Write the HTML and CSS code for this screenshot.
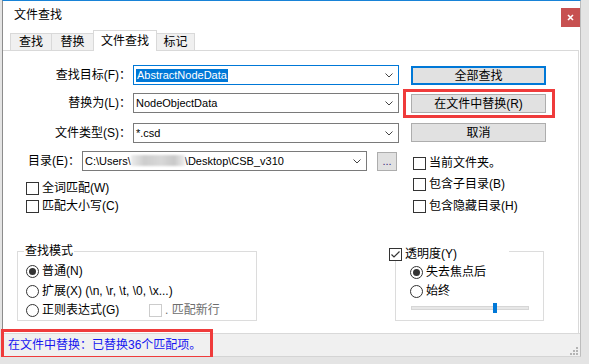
FILE: index.html
```html
<!DOCTYPE html>
<html lang="zh">
<head>
<meta charset="utf-8">
<title>文件查找</title>
<link rel="stylesheet" href="styles.css">
</head>
<body>
<div class="win">
  <div class="titlebar">
    <span class="title">文件查找</span>
    <div class="close"><svg width="7" height="7" viewBox="0 0 7 7"><path d="M1 1 L6 6 M6 1 L1 6" stroke="#fff" stroke-width="1.6"/></svg></div>
  </div>
  <div class="tabs">
    <div class="tab t1">查找</div>
    <div class="tab t2">替换</div>
    <div class="tab active">文件查找</div>
    <div class="tab t4">标记</div>
  </div>
  <div class="panel">
    <div class="top">
      <div class="leftcol">
        <div class="row r1">
          <label class="lbl w1">查找目标(F)：</label>
          <div class="combo focus"><span class="val sel">AbstractNodeData</span><svg class="chev" width="8" height="5" viewBox="0 0 8 5"><polyline points="0.5,0.5 4,4 7.5,0.5" fill="none" stroke="#444" stroke-width="1"/></svg></div>
        </div>
        <div class="row r2">
          <label class="lbl w1">替换为(L)：</label>
          <div class="combo"><span class="val">NodeObjectData</span><svg class="chev" width="8" height="5" viewBox="0 0 8 5"><polyline points="0.5,0.5 4,4 7.5,0.5" fill="none" stroke="#444" stroke-width="1"/></svg></div>
        </div>
        <div class="row r3">
          <label class="lbl w1">文件类型(S)：</label>
          <div class="combo"><span class="val">*.csd</span><svg class="chev" width="8" height="5" viewBox="0 0 8 5"><polyline points="0.5,0.5 4,4 7.5,0.5" fill="none" stroke="#444" stroke-width="1"/></svg></div>
        </div>
        <div class="row r4">
          <label class="lbl w2">目录(E)：</label>
          <div class="combo dir"><span class="val">C:\Users\<span class="blur"></span>\Desktop\CSB_v310</span><svg class="chev" width="8" height="5" viewBox="0 0 8 5"><polyline points="0.5,0.5 4,4 7.5,0.5" fill="none" stroke="#444" stroke-width="1"/></svg></div>
          <div class="btn dots">...</div>
        </div>
        <div class="chk c1"><span class="box"></span><span>全词匹配(W)</span></div>
        <div class="chk c2"><span class="box"></span><span>匹配大小写(C)</span></div>
      </div>
      <div class="rightcol">
        <div class="btn b1">全部查找</div>
        <div class="btn b2">在文件中替换(R)</div>
        <div class="btn b3">取消</div>
        <div class="chk rc1"><span class="box"></span><span>当前文件夹。</span></div>
        <div class="chk rc2"><span class="box"></span><span>包含子目录(B)</span></div>
        <div class="chk rc3"><span class="box"></span><span>包含隐藏目录(H)</span></div>
      </div>
    </div>
    <div class="groups">
      <div class="group g1">
        <span class="gt1">查找模式</span>
        <div class="radio"><span class="rb on"></span><span>普通(N)</span></div>
        <div class="radio gr2"><span class="rb"></span><span>扩展(X) (\n, \r, \t, \0, \x...)</span></div>
        <div class="radio gr3"><span class="rb"></span><span class="rlab">正则表达式(G)</span>
          <span class="chk dis"><span class="box"></span><span>. 匹配新行</span></span>
        </div>
      </div>
      <div class="group g2">
        <div class="gt2"><span class="box"><svg width="11" height="11" viewBox="0 0 11 11"><polyline points="1.5,5.5 4,8 9.5,2.5" fill="none" stroke="#333" stroke-width="1.2"/></svg></span><span>透明度(Y)</span></div>
        <div class="radio"><span class="rb on"></span><span>失去焦点后</span></div>
        <div class="radio gr2b"><span class="rb"></span><span>始终</span></div>
        <div class="slider"><span class="thumb"></span></div>
      </div>
    </div>
  </div>
  <div class="status">
    <span>在文件中替换：已替换36个匹配项。</span>
    <svg class="grip" width="8" height="8" viewBox="0 0 8 8"><g fill="#b4b4b4"><rect x="6" y="0" width="2" height="2"/><rect x="3" y="3" width="2" height="2"/><rect x="6" y="3" width="2" height="2"/><rect x="0" y="6" width="2" height="2"/><rect x="3" y="6" width="2" height="2"/><rect x="6" y="6" width="2" height="2"/></g></svg>
  </div>
  <div class="mark mark-btn"></div>
  <div class="mark mark-status"></div>
</div>
</body>
</html>
```
FILE: styles.css
```css
body {
  margin: 0;
  background: #e4e4e4;
  font: 12px/14px "Liberation Sans", "Noto Sans CJK SC", sans-serif;
  color: #000;
}
.win {
  margin-left: 2px;
  width: 579px;
  height: 357px;
  box-sizing: border-box;
  border-top: 1px solid #1883d7;
  border-left: 1px solid #8c8c8c;
  border-right: 1px solid #bdbdbd;
  border-bottom: 1px solid #d4d4d4;
  background: #fff;
  position: relative;
  display: flex;
  flex-direction: column;
}
.titlebar {
  height: 29px;
  display: flex;
  justify-content: space-between;
  align-items: flex-start;
}
.title { margin: 7px 0 0 11px; }
.close {
  width: 19px;
  height: 19px;
  margin-top: 7px;
  background: #c75050;
  display: flex;
  align-items: center;
  justify-content: center;
}
.tabs {
  height: 20px;
  display: flex;
  align-items: flex-end;
  padding-left: 7px;
  position: relative;
  z-index: 1;
}
.tab {
  height: 17px;
  box-sizing: border-box;
  border: 1px solid #d9d9d9;
  border-bottom: none;
  background: #f0f0f0;
  margin-right: -1px;
  display: flex;
  align-items: center;
  justify-content: center;
}
.t1 { width: 42px; }
.t2 { width: 43px; }
.t4 { width: 39px; }
.tab.active {
  width: 64px;
  height: 21px;
  margin-bottom: -1px;
  background: #fff;
  position: relative;
  z-index: 2;
}
.panel {
  height: 283px;
  width: 576px;
  box-sizing: border-box;
  border-top: 1px solid #d9d9d9;
  border-right: 1px solid #d9d9d9;
  display: flex;
  flex-direction: column;
}
.top { height: 200px; display: flex; }
.leftcol { width: 396px; }
.row { display: flex; height: 20px; align-items: center; }
.r1 { margin-top: 14px; }
.r2 { margin-top: 8px; }
.r3 { margin-top: 10px; }
.r4 { margin-top: 8px; }
.lbl { text-align: right; white-space: nowrap; }
.w1 { width: 128px; margin-right: 2px; }
.w2 { width: 77px; margin-right: 2px; }
.combo {
  width: 266px;
  height: 20px;
  box-sizing: border-box;
  border: 1px solid #7a7a7a;
  display: flex;
  align-items: center;
  justify-content: space-between;
  padding: 0 5px 0 2px;
  background: #fff;
}
.combo.focus { border-color: #0078d7; }
.combo.dir { width: 285px; }
.val { font-size: 11px; line-height: 13px; white-space: nowrap; }
.sel { background: #0078d7; color: #fff; display: inline-block; padding: 0 1px; }
.blur {
  display: inline-block;
  width: 54px;
  height: 11px;
  vertical-align: -1px;
  background: linear-gradient(90deg, #ececec, #cdcdcd 25%, #d8d8d8 55%, #c9c9c9 80%, #eeeeee);
  filter: blur(1px);
}
.btn {
  width: 135px;
  height: 19px;
  box-sizing: border-box;
  border: 1px solid #adadad;
  background: #e1e1e1;
  display: flex;
  align-items: center;
  justify-content: center;
}
.dots {
  width: 20px;
  margin-left: 10px;
  color: #3a2a7a;
  font-size: 11px;
  line-height: 10px;
}
.chk {
  display: flex;
  align-items: center;
  height: 13px;
  line-height: 13px;
  gap: 3px;
  white-space: nowrap;
}
.box {
  width: 13px;
  height: 13px;
  box-sizing: border-box;
  border: 1px solid #333;
  background: #fff;
  display: flex;
  align-items: center;
  justify-content: center;
  flex: none;
}
.c1 { margin: 11px 0 0 23px; }
.c2 { margin: 5px 0 0 23px; }
.rightcol {
  margin-left: 12px;
  width: 135px;
  display: flex;
  flex-direction: column;
  align-items: flex-start;
}
.b1 { margin-top: 15px; border: 2px solid #0078d7; }
.b2 { margin-top: 9px; }
.b3 { margin-top: 10px; }
.rc1 { margin: 15px 0 0 2px; }
.rc2 { margin: 8px 0 0 2px; }
.rc3 { margin: 9px 0 0 2px; }
.groups { display: flex; height: 70px; }
.group {
  position: relative;
  height: 70px;
  box-sizing: border-box;
  border: 1px solid #dcdcdc;
}
.g1 { margin-left: 14px; width: 240px; padding: 13px 0 0 8px; }
.g2 { margin-left: 138px; width: 149px; padding: 14px 0 0 14px; }
.gt1 {
  position: absolute;
  left: 6px;
  top: -8px;
  padding: 0 1px;
  background: #fff;
}
.gt2 {
  position: absolute;
  left: -7px;
  top: -5px;
  width: 120px;
  height: 14px;
  background: #fff;
  display: flex;
  align-items: center;
  gap: 3px;
}
.radio {
  display: flex;
  align-items: center;
  height: 13px;
  line-height: 13px;
  gap: 3px;
  white-space: nowrap;
}
.gr2 { margin-top: 7px; }
.gr3 { margin-top: 6px; }
.gr2b { margin-top: 6px; }
.rb {
  width: 13px;
  height: 13px;
  box-sizing: border-box;
  border: 1px solid #333;
  border-radius: 50%;
  display: flex;
  align-items: center;
  justify-content: center;
  flex: none;
}
.rb.on::after {
  content: "";
  width: 7px;
  height: 7px;
  border-radius: 50%;
  background: #333;
}
.rlab { width: 104px; }
.dis { color: #6d6d6d; }
.dis .box { border-color: #cccccc; }
.slider {
  position: relative;
  margin: 8px 0 0 1px;
  width: 118px;
  height: 4px;
  box-sizing: border-box;
  background: #e7e7e7;
  border: 1px solid #d6d6d6;
}
.thumb {
  position: absolute;
  left: 81px;
  top: -4px;
  width: 4px;
  height: 10px;
  background: #0078d7;
}
.status {
  height: 23px;
  box-sizing: border-box;
  border-top: 1px solid #d9d9d9;
  background: #f0f0f0;
  display: flex;
  align-items: center;
  justify-content: space-between;
  padding-left: 5px;
  color: #1515f0;
}
.grip { align-self: flex-end; margin: 0 2px 1px 0; }
.mark {
  position: absolute;
  border: 3px solid #ef3b3b;
  box-sizing: border-box;
  pointer-events: none;
}
.mark-btn { left: 400px; top: 88px; width: 152px; height: 29px; }
.mark-status { left: -2px; top: 328px; width: 212px; height: 30px; }
```
